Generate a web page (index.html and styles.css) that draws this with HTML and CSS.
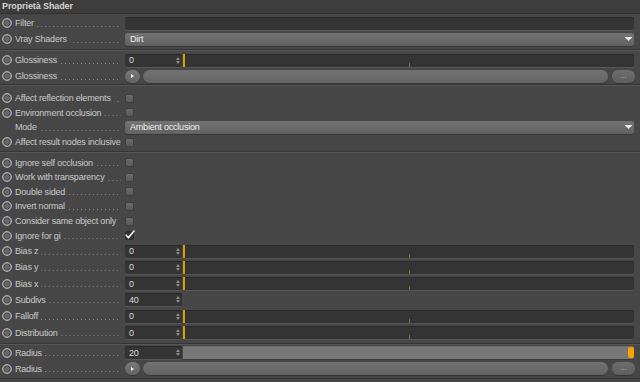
FILE: index.html
```html
<!DOCTYPE html>
<html lang="it">
<head>
<meta charset="utf-8">
<title>Proprietà Shader</title>
<link rel="stylesheet" href="styles.css">
</head>
<body>
<div class="panel">
  <div class="header">Proprietà Shader</div>

  <div class="group g1">
    <div class="row r16">
      <span class="lbl"><i class="radio"></i><span class="txt">Filter</span><span class="dots"></span></span>
      <div class="input"></div>
    </div>
    <div class="row r16">
      <span class="lbl"><i class="radio"></i><span class="txt">Vray Shaders</span><span class="dots"></span></span>
      <div class="dd"><span>Dirt</span><svg class="arr" width="7" height="4" viewBox="0 0 7 4"><rect x="0" y="0" width="7" height="1" fill="#e8e8e8"/><path d="M0.5 1 L6.5 1 L3.5 4 Z" fill="#e8e8e8"/></svg></div>
    </div>
  </div>

  <div class="group g2">
    <div class="row r16">
      <span class="lbl"><i class="radio"></i><span class="txt">Glossiness</span><span class="dots"></span></span>
      <div class="num"><span>0</span><svg class="spin" width="4" height="7" viewBox="0 0 4 7"><path d="M0 3 L2 0 L4 3 Z M0 4 L4 4 L2 7 Z" fill="#8e8e8e"/></svg></div>
      <i class="mark"></i>
      <div class="track"><i class="tick"></i></div>
    </div>
    <div class="row r16">
      <span class="lbl"><i class="radio"></i><span class="txt">Glossiness</span><span class="dots"></span></span>
      <div class="rbtn"><svg width="3" height="4" viewBox="0 0 3 4"><path d="M0 0 L3 2 L0 4 Z" fill="#f0f0f0"/></svg></div>
      <div class="pill"></div>
      <div class="more">...</div>
    </div>
  </div>

  <div class="group g3">
    <div class="row r15">
      <span class="lbl"><i class="radio"></i><span class="txt">Affect reflection elements</span><span class="dots"></span></span>
      <i class="cb"></i>
    </div>
    <div class="row r15">
      <span class="lbl"><i class="radio"></i><span class="txt">Environment occlusion</span><span class="dots"></span></span>
      <i class="cb"></i>
    </div>
    <div class="row r15">
      <span class="lbl noradio"><span class="txt">Mode</span><span class="dots"></span></span>
      <div class="dd"><span>Ambient occlusion</span><svg class="arr" width="7" height="4" viewBox="0 0 7 4"><rect x="0" y="0" width="7" height="1" fill="#e8e8e8"/><path d="M0.5 1 L6.5 1 L3.5 4 Z" fill="#e8e8e8"/></svg></div>
    </div>
    <div class="row r15">
      <span class="lbl"><i class="radio"></i><span class="txt">Affect result nodes inclusive</span><span class="dots"></span></span>
      <i class="cb"></i>
    </div>
  </div>

  <div class="group g4">
    <div class="row r15">
      <span class="lbl"><i class="radio"></i><span class="txt">Ignore self occlusion</span><span class="dots"></span></span>
      <i class="cb"></i>
    </div>
    <div class="row r15">
      <span class="lbl"><i class="radio"></i><span class="txt">Work with transparency</span><span class="dots"></span></span>
      <i class="cb"></i>
    </div>
    <div class="row r15">
      <span class="lbl"><i class="radio"></i><span class="txt">Double sided</span><span class="dots"></span></span>
      <i class="cb"></i>
    </div>
    <div class="row r15">
      <span class="lbl"><i class="radio"></i><span class="txt">Invert normal</span><span class="dots"></span></span>
      <i class="cb"></i>
    </div>
    <div class="row r15">
      <span class="lbl"><i class="radio"></i><span class="txt">Consider same object only</span><span class="dots"></span></span>
      <i class="cb"></i>
    </div>
    <div class="row r15">
      <span class="lbl"><i class="radio"></i><span class="txt">Ignore for gi</span><span class="dots"></span></span>
      <i class="cb checked"><svg width="10" height="9" viewBox="0 0 10 9"><path d="M1.2 5.2 L3.4 7.8 L9 1" fill="none" stroke="#f2f2f2" stroke-width="1.6" stroke-linecap="round" stroke-linejoin="round"/></svg></i>
    </div>
    <div class="row r17">
      <span class="lbl"><i class="radio"></i><span class="txt">Bias z</span><span class="dots"></span></span>
      <div class="num"><span>0</span><svg class="spin" width="4" height="7" viewBox="0 0 4 7"><path d="M0 3 L2 0 L4 3 Z M0 4 L4 4 L2 7 Z" fill="#8e8e8e"/></svg></div>
      <i class="mark"></i>
      <div class="track"><i class="tick"></i></div>
    </div>
    <div class="row r17">
      <span class="lbl"><i class="radio"></i><span class="txt">Bias y</span><span class="dots"></span></span>
      <div class="num"><span>0</span><svg class="spin" width="4" height="7" viewBox="0 0 4 7"><path d="M0 3 L2 0 L4 3 Z M0 4 L4 4 L2 7 Z" fill="#8e8e8e"/></svg></div>
      <i class="mark"></i>
      <div class="track"><i class="tick"></i></div>
    </div>
    <div class="row r17">
      <span class="lbl"><i class="radio"></i><span class="txt">Bias x</span><span class="dots"></span></span>
      <div class="num"><span>0</span><svg class="spin" width="4" height="7" viewBox="0 0 4 7"><path d="M0 3 L2 0 L4 3 Z M0 4 L4 4 L2 7 Z" fill="#8e8e8e"/></svg></div>
      <i class="mark"></i>
      <div class="track"><i class="tick"></i></div>
    </div>
    <div class="row r17">
      <span class="lbl"><i class="radio"></i><span class="txt">Subdivs</span><span class="dots"></span></span>
      <div class="num"><span>40</span><svg class="spin" width="4" height="7" viewBox="0 0 4 7"><path d="M0 3 L2 0 L4 3 Z M0 4 L4 4 L2 7 Z" fill="#8e8e8e"/></svg></div>
    </div>
    <div class="row r17">
      <span class="lbl"><i class="radio"></i><span class="txt">Falloff</span><span class="dots"></span></span>
      <div class="num"><span>0</span><svg class="spin" width="4" height="7" viewBox="0 0 4 7"><path d="M0 3 L2 0 L4 3 Z M0 4 L4 4 L2 7 Z" fill="#8e8e8e"/></svg></div>
      <i class="mark"></i>
      <div class="track"><i class="tick"></i></div>
    </div>
    <div class="row r17">
      <span class="lbl"><i class="radio"></i><span class="txt">Distribution</span><span class="dots"></span></span>
      <div class="num"><span>0</span><svg class="spin" width="4" height="7" viewBox="0 0 4 7"><path d="M0 3 L2 0 L4 3 Z M0 4 L4 4 L2 7 Z" fill="#8e8e8e"/></svg></div>
      <i class="mark"></i>
      <div class="track"><i class="tick"></i></div>
    </div>
  </div>

  <div class="group g5">
    <div class="row r16">
      <span class="lbl"><i class="radio"></i><span class="txt">Radius</span><span class="dots"></span></span>
      <div class="num"><span>20</span><svg class="spin" width="4" height="7" viewBox="0 0 4 7"><path d="M0 3 L2 0 L4 3 Z M0 4 L4 4 L2 7 Z" fill="#8e8e8e"/></svg></div>
      <div class="track full"><i class="knob"></i></div>
    </div>
    <div class="row r16">
      <span class="lbl"><i class="radio"></i><span class="txt">Radius</span><span class="dots"></span></span>
      <div class="rbtn"><svg width="3" height="4" viewBox="0 0 3 4"><path d="M0 0 L3 2 L0 4 Z" fill="#f0f0f0"/></svg></div>
      <div class="pill"></div>
      <div class="more">...</div>
    </div>
  </div>
</div>
</body>
</html>
```

FILE: styles.css
```css
html, body {
  margin: 0;
  padding: 0;
}
body {
  width: 640px;
  height: 382px;
  overflow: hidden;
  background: #474747;
  font-family: "Liberation Sans", Arial, sans-serif;
  font-size: 9px;
  letter-spacing: -0.2px;
  color: #cacaca;
}
.panel {
  display: flex;
  flex-direction: column;
}
.header {
  height: 13px;
  line-height: 13px;
  padding-left: 2px;
  background: #3d3d3d;
  border-bottom: 1px solid #303030;
  font-weight: bold;
  letter-spacing: -0.1px;
  color: #d4d4d4;
}
.group {
  border-bottom: 1px solid #363636;
}
.group + .group {
  border-top: 1px solid #565656;
}
.g1 { padding: 1px 0 2px; }
.g2 { padding: 1px 0 0; }
.g3 { padding: 5px 0 2px; }
.g4 { padding: 2px 0 2px; }
.g5 { padding: 0 0 1px; }

.row {
  display: flex;
  align-items: center;
  padding-right: 6px;
}
.r16 { height: 16px; }
.r15 { height: 14.6px; }
.r17 { height: 16.3px; }

.lbl {
  flex: none;
  width: 125px;
  box-sizing: border-box;
  padding-left: 2px;
  display: flex;
  align-items: center;
  white-space: nowrap;
}
.lbl.noradio { padding-left: 15px; }
.radio {
  flex: none;
  width: 10px;
  height: 10px;
  box-sizing: border-box;
  border-radius: 50%;
  margin-right: 3px;
  border: 1px solid #b0b0b0;
  background: radial-gradient(circle, #666666 0 2.4px, #474747 2.9px 3.1px, #8a8a8a 3.7px);
}
.txt { flex: none; }
.dots {
  flex: 1;
  height: 1px;
  margin: 6px 4px 0 3px;
  background-image: linear-gradient(to right, #8a8a8a 1px, transparent 1px);
  background-size: 4px 1px;
  background-repeat: repeat-x;
  background-position: right 0 top 0;
}

.input {
  flex: 1;
  height: 13px;
  border-radius: 2px;
  background: #353535;
  box-shadow: inset 0 1px 0 #2a2a2a, 0 1px 0 #565656;
}
.dd {
  flex: 1;
  height: 13px;
  box-sizing: border-box;
  border-radius: 3px;
  background: linear-gradient(#747474, #626262);
  box-shadow: 0 1px 0 #363636;
  display: flex;
  align-items: center;
  justify-content: space-between;
  padding: 0 2px 0 5px;
  color: #eeeeee;
}
.arr { flex: none; }

.num {
  flex: none;
  width: 57px;
  height: 13px;
  box-sizing: border-box;
  border-radius: 2px;
  background: #343434;
  box-shadow: inset 0 1px 0 #292929, 0 1px 0 #575757;
  display: flex;
  align-items: center;
  justify-content: space-between;
  padding: 0 2px 0 4px;
  color: #dadada;
}
.spin { flex: none; }
.mark {
  flex: none;
  width: 2px;
  height: 13px;
  margin-left: 1px;
  background: #dc9d00;
}
.track {
  flex: 1;
  height: 13px;
  background: #343434;
  border-radius: 0 2px 2px 0;
  box-shadow: inset 0 1px 0 #292929, 0 1px 0 #575757;
  display: flex;
  justify-content: center;
  align-items: flex-end;
}
.tick {
  width: 1px;
  height: 4px;
  background: #8a7236;
}
.track.full {
  margin-left: 1px;
  background: #787878;
  box-shadow: inset 0 1px 0 #6a6a6a, 0 1px 0 #3a3a3a;
  justify-content: flex-end;
  align-items: center;
}
.knob {
  width: 6px;
  height: 11px;
  border-radius: 2px;
  background: #f6a300;
}

.cb {
  flex: none;
  width: 9px;
  height: 9px;
  box-sizing: border-box;
  border-radius: 2px;
  background: linear-gradient(#6c6c6c, #595959);
  border: 1px solid #3e3e3e;
  position: relative;
}
.cb.checked {
  background: #333333;
  border-color: #2c2c2c;
}
.cb.checked svg {
  position: absolute;
  left: -1px;
  top: -2px;
}

.rbtn {
  flex: none;
  width: 15px;
  height: 13px;
  border-radius: 7px;
  background: linear-gradient(#787878, #646464);
  box-shadow: 0 1px 0 #363636;
  display: flex;
  align-items: center;
  justify-content: center;
}
.pill {
  flex: 1;
  height: 13px;
  margin-left: 3px;
  border-radius: 7px;
  background: linear-gradient(#727272, #646464);
  box-shadow: 0 1px 0 #363636;
}
.more {
  flex: none;
  width: 23px;
  height: 13px;
  margin-left: 4px;
  margin-right: -1px;
  border-radius: 6px;
  background: linear-gradient(#6e6e6e, #5e5e5e);
  box-shadow: 0 1px 0 #363636;
  font-size: 7px;
  line-height: 11px;
  letter-spacing: 0.3px;
  text-align: center;
  color: #c4c4c4;
}
```
